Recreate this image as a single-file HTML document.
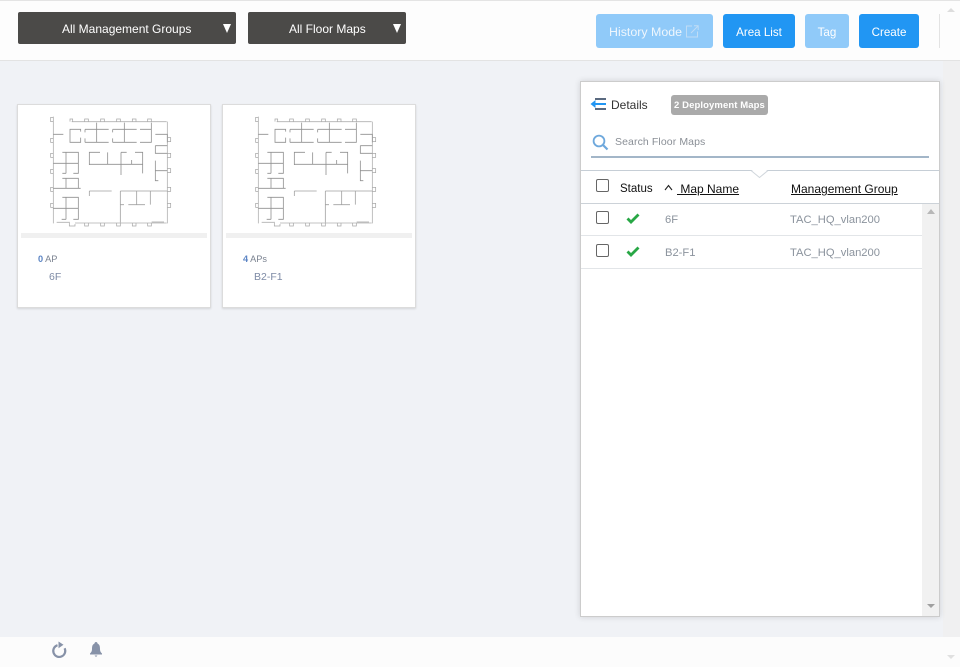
<!DOCTYPE html>
<html>
<head>
<meta charset="utf-8">
<style>
html,body{margin:0;padding:0;width:960px;height:667px;overflow:hidden;background:#f0f2f6;font-family:"Liberation Sans",sans-serif;}
.a{position:absolute;box-sizing:border-box;white-space:nowrap;}
#hdr{left:0;top:0;width:960px;height:61px;background:#fdfdfd;border-top:1px solid #e4e4e4;border-bottom:1px solid #e3e3e3;}
.dd{background:#4b4a48;border-radius:2px;top:12px;height:32px;color:#fff;font-size:12px;line-height:35px;}
.btn{top:14px;height:34px;border-radius:3px;color:#fff;font-size:11.6px;line-height:37px;text-align:center;background:#2196f3;}
.lt{background:#90caf9;}
.tri{width:0;height:0;border-left:4.5px solid transparent;border-right:4.5px solid transparent;border-top:9px solid #fff;top:24px;}
.card{top:104px;width:194px;height:204px;background:#fff;border:1px solid #dcdcdc;box-shadow:0 1px 2px rgba(0,0,0,.12);}
.band{left:3px;top:128px;width:186px;height:5px;background:#f0f0f0;}
.n{left:20px;top:148px;font-size:9.2px;color:#7a8290;line-height:12px;}
.n b{color:#5b84c4;}
.m{left:31px;top:165px;font-size:10.5px;color:#7d8aa5;line-height:14px;}
.plan{left:-8px;top:-5px;filter:blur(.3px);}
#panel{left:580px;top:81px;width:360px;height:536px;background:#fff;border:1px solid #ccc;box-shadow:0 0 6px rgba(0,0,0,.14);}
.cb{left:596px;width:13px;height:13px;border:1.3px solid #666;border-radius:2px;background:#fff;}
.hd{top:182px;font-size:12px;color:#111;line-height:14px;}
.u{text-decoration:underline;}
.cell{font-size:11.2px;color:#8b939d;line-height:14px;}
.line{left:581px;width:342px;height:1px;background:#e2e5e8;}
</style>
</head>
<body>
<div class="a" id="hdr"></div>
<div class="a" style="left:943px;top:61px;width:17px;height:576px;background:#f0f0f1"></div>
<div class="a dd" style="left:18px;width:218px;padding-left:44px">All Management Groups</div>
<div class="a tri" style="left:222.5px"></div>
<div class="a dd" style="left:248px;width:158px;padding-left:41px">All Floor Maps</div>
<div class="a tri" style="left:392.5px"></div>
<div class="a btn lt" style="left:596px;width:117px;text-align:left;padding-left:13px;color:#eef6fd;font-size:12.4px">History Mode</div>
<svg class="a" style="left:685px;top:25px" width="14" height="13" viewBox="0 0 14 13" fill="none" stroke="#bfdcf5" stroke-width="1"><path d="M7 1H1.5V12H12.5V6.5M6 8L13 1M9 .8H13.2V5"/></svg>
<div class="a btn" style="left:723px;width:72px">Area List</div>
<div class="a btn lt" style="left:805px;width:44px">Tag</div>
<div class="a btn" style="left:859px;width:60px">Create</div>
<div class="a" style="left:939px;top:14px;width:1px;height:34px;background:#e3e3e3"></div>
<div class="a" style="left:947px;top:8px;width:0;height:0;border-left:4px solid transparent;border-right:4px solid transparent;border-bottom:4px solid #ddd"></div>

<svg width="0" height="0" style="position:absolute">
<defs>
<g id="plan" fill="none" stroke="#8f8f8f" stroke-width="2.4">
<path d="M185 65H470M130 50V370M140 367H180M195 369H470M472 65V370" stroke="#b0b0b0"/>
<path d="M212 88H180V127H212V113M200 88H212V95M225 88H296M225 127H296M260 68V127M225 88V97M225 115V127M308 88H380M308 127H380M343 68V127M308 88V97M308 115V127M390 88H424V127H390M424 68V127M130 103H160"/>
<path d="M436 103H472V127M436 137H472M436 137V160H472M436 182V242H445M436 212H472"/>
<path d="M130 190H205M168 157V220M157 157H205V220H190M157 220H168M157 235H205V265M168 235V265M130 265H212"/>
<path d="M238 195V157H270M238 193H398M293 157V193M333 157V225M333 157H350M375 157H398V220M365 180V193"/>
<path d="M238 273H305M238 273V288M331 273H472M331 273V368M380 273V314M421 273V314M355 314H405M331 314H342M425 366H462" stroke="#a0a0a0"/>
<path d="M130 325H205M168 292V358M157 292H205V358H190M155 358H168"/>
<path stroke="#a8a8a8" stroke-width="2.2" d="M180 65V57H188V65M224 65V57H235V65M272 65V57H283V65M320 65V57H331V65M367 65V57H378V65M413 65V57H424V65M224 369V378H235V369M272 369V378H283V369M320 369V378H331V369M367 369V378H378V369M413 369V378H424V369M178 369V378H195V372M130 52H122V65H130M130 115H122V127H130M130 160H122V172H130M130 208H122V220H130M130 262H122V274H130M130 310H122V322H130M472 113H482V125H472M472 160H482V172H472M472 206H482V218H472M472 262H482V274H472M472 310H482V322H472"/>
</g>
</defs>
</svg>

<div class="a card" style="left:17px">
<svg class="a plan" width="210" height="215" viewBox="0 0 630 645"><use href="#plan"/></svg>
<div class="a band"></div>
<div class="a n"><b>0</b> AP</div>
<div class="a m">6F</div>
</div>
<div class="a card" style="left:222px">
<svg class="a plan" width="210" height="215" viewBox="0 0 630 645"><use href="#plan"/></svg>
<div class="a band"></div>
<div class="a n"><b>4</b> APs</div>
<div class="a m">B2-F1</div>
</div>

<div class="a" id="panel"></div>
<svg class="a" style="left:590px;top:97px" width="18" height="14" viewBox="0 0 18 14" fill="none" stroke-width="2"><path d="M5 2H16M5 12H16" stroke="#5a6a80"/><path d="M4 7H16" stroke="#2196f3"/><path d="M5.5 3L.5 7L5.5 11Z" stroke="none" fill="#2196f3"/></svg>
<div class="a" style="left:611px;top:97px;font-size:12px;color:#333;line-height:16px">Details</div>
<div class="a" style="left:671px;top:95px;width:97px;height:20px;background:#aaa;border-radius:3px;color:#fff;font-size:9.5px;font-weight:bold;line-height:21px;padding-left:3px;letter-spacing:.1px;">2 Deployment Maps</div>
<svg class="a" style="left:592px;top:134px" width="17" height="17" viewBox="0 0 17 17" fill="none" stroke="#6ea8dc" stroke-width="1.8"><circle cx="7" cy="7" r="5.4"/><path d="M11 11L15.5 15.5" stroke-width="2.2"/></svg>
<div class="a" style="left:615px;top:135px;font-size:10.5px;color:#8a8f96;line-height:14px;letter-spacing:.1px">Search Floor Maps</div>
<div class="a" style="left:591px;top:156px;width:338px;height:2px;background:#a3b6c8"></div>

<div class="a" style="left:581px;top:170px;width:358px;height:1px;background:#c6ced6"></div>
<svg class="a" style="left:750px;top:169px" width="20" height="10" viewBox="0 0 20 10"><path d="M1 1.5L9.5 8.5L18 1.5" fill="#fff" stroke="#d0d6dc"/><path d="M2.5 1H16.5V1.9H2.5Z" fill="#fff"/></svg>

<div class="a cb" style="top:179px"></div>
<div class="a hd" style="left:620px;font-size:11.5px">Status</div>
<svg class="a" style="left:664px;top:184px" width="9" height="7" viewBox="0 0 9 7" fill="none" stroke="#222" stroke-width="1.1"><path d="M1 6L4.5 1.5L8 6"/></svg>
<div class="a hd u" style="left:677px;white-space:pre"> Map Name</div>
<div class="a hd u" style="left:791px">Management Group</div>
<div class="a line" style="top:203px;background:#ccd2d8;width:358px"></div>

<div class="a cb" style="top:211px"></div>
<svg class="a" style="left:626px;top:213px" width="14" height="11" viewBox="0 0 14 11" fill="none" stroke="#28a745" stroke-width="2.8"><path d="M1.5 5.5L5 9L12.5 1.5"/></svg>
<div class="a cell" style="left:665px;top:213px">6F</div>
<div class="a cell" style="left:790px;top:213px">TAC_HQ_vlan200</div>
<div class="a line" style="top:235px"></div>

<div class="a cb" style="top:244px"></div>
<svg class="a" style="left:626px;top:246px" width="14" height="11" viewBox="0 0 14 11" fill="none" stroke="#28a745" stroke-width="2.8"><path d="M1.5 5.5L5 9L12.5 1.5"/></svg>
<div class="a cell" style="left:665px;top:246px">B2-F1</div>
<div class="a cell" style="left:790px;top:246px">TAC_HQ_vlan200</div>
<div class="a line" style="top:268px"></div>

<div class="a" style="left:922px;top:204px;width:17px;height:412px;background:#f1f1f1"></div>
<div class="a" style="left:927px;top:209px;width:0;height:0;border-left:4px solid transparent;border-right:4px solid transparent;border-bottom:5px solid #b8b8b8"></div>
<div class="a" style="left:927px;top:604px;width:0;height:0;border-left:4px solid transparent;border-right:4px solid transparent;border-top:4px solid #a0a0a0"></div>

<div class="a" style="left:0;top:637px;width:960px;height:30px;background:#fcfcfc"></div>
<svg class="a" style="left:50px;top:640px" width="18" height="19" viewBox="0 0 18 19" fill="none"><path d="M7.5 5.2A6 6 0 1 0 14.6 8.2" stroke="#8792a8" stroke-width="2.2"/><path d="M8.5 1.5L13.5 4.8L8.5 8.2Z" fill="#8792a8"/></svg>
<svg class="a" style="left:89px;top:641px" width="14" height="17" viewBox="0 0 14 17"><path d="M7 1C8 1 8.4 1.8 8.6 2.6C10.6 3.4 11 5.5 11 8C11 10.5 12 11.5 13 12.5V13.5H1V12.5C2 11.5 3 10.5 3 8C3 5.5 3.4 3.4 5.4 2.6C5.6 1.8 6 1 7 1Z" fill="#8792a8"/><path d="M5.5 14.5H8.5L7 16Z" fill="#8792a8"/></svg>
<div class="a" style="left:947px;top:655px;width:0;height:0;border-left:4px solid transparent;border-right:4px solid transparent;border-top:4px solid #e0e0e0"></div>
</body>
</html>
